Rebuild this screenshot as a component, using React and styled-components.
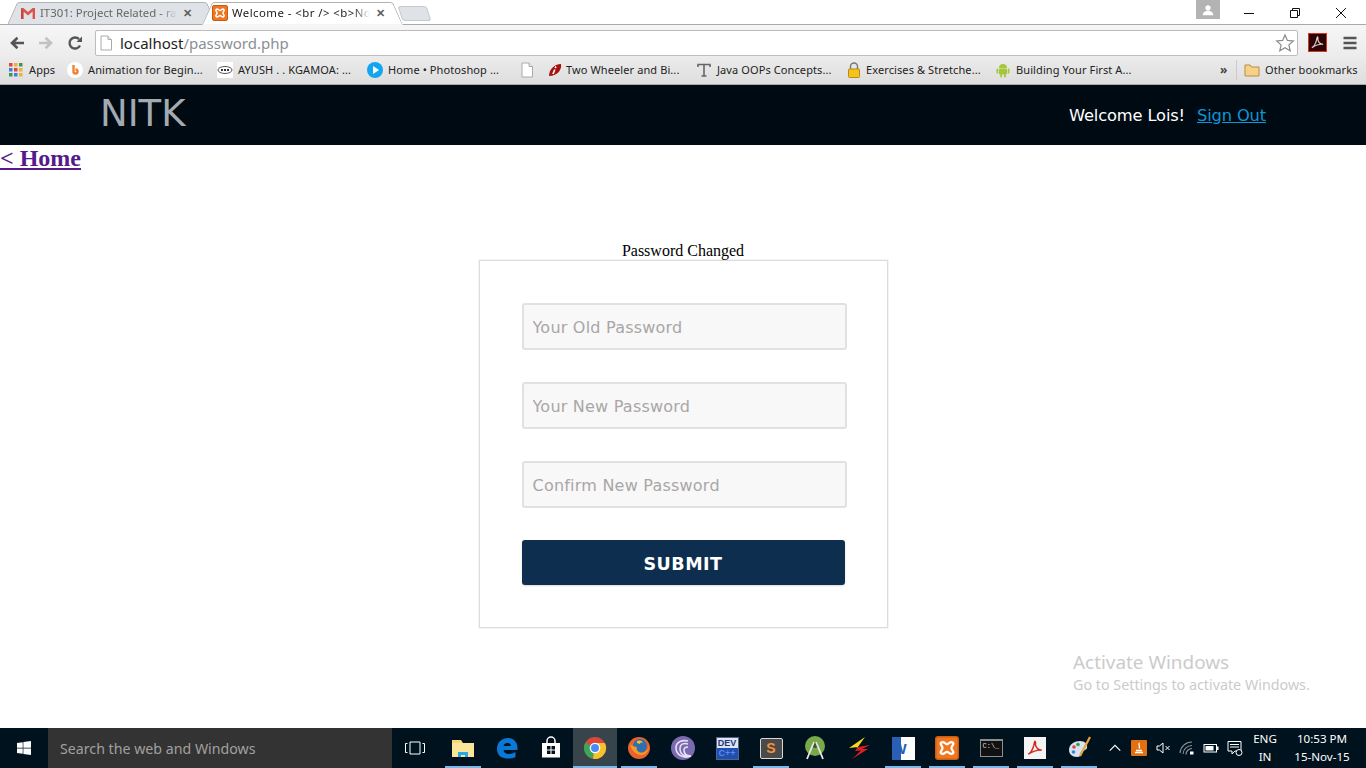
import React from 'react';
import styled, { createGlobalStyle } from 'styled-components';
import { FaWindows } from 'react-icons/fa';

const Global = createGlobalStyle`
  html, body { margin: 0; padding: 0; background: #fff; }
  * { box-sizing: border-box; }
`;

const uiFont = `"Noto Sans", "Open Sans", "Liberation Sans", sans-serif`;
const webFont = `"DejaVu Sans", Verdana, sans-serif`;

const Screen = styled.div`
  position: relative;
  width: 1366px;
  height: 768px;
  overflow: hidden;
  display: flex;
  flex-direction: column;
  background: #fff;
`;

/* browser chrome */
const TabStrip = styled.div`
  height: 25px;
  flex: none;
  display: flex;
  align-items: flex-end;
  padding: 0 2px 0 14px;
  background: #fff;
  border-bottom: 1px solid #a9a9a9;
  font-family: ${uiFont};
  font-size: 12px;
`;

const Tab = styled.div`
  position: relative;
  flex: none;
  width: ${p => p.$w}px;
  height: 23px;
  margin-bottom: -1px;
  margin-right: ${p => p.$mr || 0}px;
  display: flex;
  align-items: center;
  gap: 4px;
  padding: 0 0 2px ${p => p.$pl || 0}px;
  z-index: ${p => (p.$active ? 2 : 1)};
  color: ${p => (p.$active ? '#222' : '#666')};
  &::before, &::after {
    content: '';
    position: absolute;
    top: 0;
    bottom: 0;
    width: 55%;
    z-index: -1;
    background: ${p => (p.$active ? '#fff' : '#dfe2e7')};
    border-top: 1px solid #b2b2b2;
  }
  &::before {
    left: -2px;
    transform: skewX(-24deg);
    border-left: 1px solid #a9a9a9;
    border-top-left-radius: 3px;
    border-bottom: ${p => (p.$active ? '1px solid #f6f6f6' : '1px solid #a9a9a9')};
  }
  &::after {
    right: -2px;
    transform: skewX(24deg);
    border-right: 1px solid #a9a9a9;
    border-top-right-radius: 3px;
    border-bottom: ${p => (p.$active ? '1px solid #f6f6f6' : '1px solid #a9a9a9')};
  }
`;

const TabTitle = styled.span`
  width: ${p => p.$w}px;
  overflow: hidden;
  white-space: nowrap;
  font-size: 11.4px;
  letter-spacing: ${p => p.$ls || 0}px;
  mask-image: linear-gradient(to right, #000 88%, transparent);
`;

const TabClose = styled.span`
  font-size: 11px;
  font-weight: 700;
  color: #5f5f5f;
  margin-left: 2px;
  line-height: 1;
`;

const NewTab = styled.div`
  width: 29px;
  height: 15px;
  margin-left: 4px;
  margin-bottom: 3px;
  background: #dfe2e7;
  border: 1px solid #c4c8ce;
  border-radius: 3px;
  transform: skewX(18deg);
`;

const WindowControls = styled.div`
  margin-left: auto;
  align-self: flex-start;
  display: flex;
  align-items: flex-start;
  height: 23px;
`;

const ProfileBadge = styled.div`
  width: 24px;
  height: 19px;
  margin-right: 6px;
  background: #b3b3b3;
  display: flex;
  align-items: center;
  justify-content: center;
`;

const WinBtn = styled.div`
  width: 46px;
  height: 23px;
  display: flex;
  align-items: center;
  justify-content: center;
  padding-top: 3px;
`;

const Toolbar = styled.div`
  height: 32px;
  flex: none;
  display: flex;
  align-items: center;
  padding: 3px 7px 0 2px;
  background: linear-gradient(#f6f6f6, #ececec);
`;

const NavIcon = styled.div`
  width: 29px;
  display: flex;
  justify-content: center;
`;

const Omnibox = styled.div`
  width: 1203px;
  height: 26px;
  margin-left: 6px;
  display: flex;
  align-items: center;
  gap: 6px;
  padding: 0 2px 0 2px;
  background: #fff;
  border: 1px solid #bdbdbd;
  border-radius: 2px;
  font-family: ${uiFont};
  font-size: 15px;
  color: #8a8f94;
  b { font-weight: 400; color: #222; }
`;

const UrlText = styled.span`
  flex: 1;
`;

const ToolbarEnd = styled.div`
  display: flex;
  align-items: center;
  margin-left: 10px;
  gap: 15px;
`;

const PdfBadge = styled.div`
  width: 19px;
  height: 19px;
  background: #2b0606;
  border: 1px solid #e0301e;
  display: flex;
  align-items: center;
  justify-content: center;
`;

const Bookmarks = styled.div`
  height: 28px;
  flex: none;
  display: flex;
  align-items: center;
  padding: 0 0 2px 8px;
  background: linear-gradient(#ebebeb, #dedede);
  border-bottom: 1px solid #a9a9a9;
  font-family: ${uiFont};
  font-size: 11px;
  letter-spacing: 0.1px;
  color: #222;
`;

const Mark = styled.div`
  width: ${p => p.$w}px;
  flex: none;
  display: flex;
  align-items: center;
  gap: ${p => p.$gap || 5}px;
  white-space: nowrap;
`;

const MarkIcon = styled.span`
  width: 16px;
  height: 16px;
  flex: none;
  display: flex;
  align-items: center;
  justify-content: center;
`;

const Overflow = styled.span`
  margin-left: 89px;
  width: 16px;
  font-size: 12px;
  font-weight: 700;
  color: #444;
`;

const Divider = styled.span`
  width: 1px;
  height: 20px;
  margin: 0 7px 0 0;
  background: #c8ccd0;
`;

/* page */
const NavBar = styled.header`
  height: 60px;
  flex: none;
  display: flex;
  align-items: center;
  justify-content: space-between;
  padding: 0 100px 0 100px;
  background: #000a13;
`;

const Brand = styled.div`
  font-family: ${webFont};
  font-size: 37px;
  color: #a3abb2;
  margin-top: -3px;
`;

const UserArea = styled.div`
  display: flex;
  gap: 12px;
  font-family: ${webFont};
  font-size: 16.3px;
  letter-spacing: -0.15px;
  color: #fff;
  margin-top: 1px;
`;

const SignOut = styled.a`
  color: #0c96d6;
  text-decoration: underline;
  cursor: pointer;
`;

const HomeLink = styled.a`
  display: block;
  flex: none;
  font-family: "Liberation Serif", serif;
  font-weight: 700;
  font-size: 24px;
  line-height: 27px;
  color: #551a8b;
  text-decoration: underline;
  cursor: pointer;
`;

const Main = styled.main`
  flex: 1;
  display: flex;
  flex-direction: column;
  align-items: center;
  padding-top: 70px;
  min-height: 0;
`;

const Status = styled.div`
  font-family: "Liberation Serif", serif;
  font-size: 16px;
  line-height: 18px;
`;

const FormCard = styled.form`
  width: 409px;
  height: 368px;
  padding: 42px 41px 0 42px;
  border: 1px solid #dcdcdc;
  box-shadow: 0 0 1px rgba(0, 0, 0, 0.25);
  background: #fff;
  display: flex;
  flex-direction: column;
  gap: 32px;
`;

const Field = styled.input`
  width: 325px;
  height: 47px;
  padding: 2px 9px 0;
  flex: none;
  font-family: ${webFont};
  font-size: 16px;
  letter-spacing: 0.22px;
  background: #f8f8f8;
  border: 2px solid #e1e1e1;
  border-radius: 3px;
  outline: none;
  &::placeholder { color: #aaa6a6; opacity: 1; }
`;

const Submit = styled.button`
  width: 323px;
  height: 45px;
  flex: none;
  padding: 2px 0 0;
  font-family: ${webFont};
  font-weight: 700;
  font-size: 17.5px;
  letter-spacing: 0.5px;
  color: #fff;
  background: #0e2e50;
  border: none;
  border-radius: 3px;
  box-shadow: 0 1px 2px rgba(0, 0, 0, 0.15);
`;

const Watermark = styled.div`
  position: absolute;
  left: 1073px;
  top: 649px;
  font-family: ${uiFont};
  color: #cbcbcb;
  pointer-events: none;
`;

const WatermarkTitle = styled.div`
  font-size: 18.9px;
  line-height: 26px;
`;

const WatermarkSub = styled.div`
  font-size: 14.3px;
  line-height: 20px;
`;

/* taskbar */
const Taskbar = styled.footer`
  height: 40px;
  flex: none;
  display: flex;
  align-items: stretch;
  background: #00121d;
  font-family: ${uiFont};
  color: #fff;
`;

const StartBtn = styled.div`
  width: 48px;
  flex: none;
  display: flex;
  align-items: center;
  justify-content: center;
`;

const SearchBox = styled.div`
  width: 344px;
  flex: none;
  display: flex;
  align-items: center;
  padding-left: 12px;
  background: #333;
  color: #a0a0a0;
  font-size: 14.2px;
`;

const TaskView = styled.div`
  width: 49px;
  flex: none;
  display: flex;
  align-items: center;
  justify-content: center;
  margin-left: -2px;
  margin-right: 2px;
`;

const Slot = styled.div`
  position: relative;
  width: 44px;
  flex: none;
  display: flex;
  align-items: center;
  justify-content: center;
  background: ${p => (p.$current ? '#37444c' : 'transparent')};
  &::after {
    content: '';
    display: ${p => (p.$open ? 'block' : 'none')};
    position: absolute;
    bottom: 0;
    left: ${p => (p.$current ? 0 : 4)}px;
    right: ${p => (p.$current ? 0 : 4)}px;
    height: 2px;
    background: #76b9ed;
  }
`;

const Tray = styled.div`
  margin-left: 2px;
  display: flex;
  align-items: center;
`;

const TrayIcon = styled.div`
  width: ${p => p.$w || 24}px;
  flex: none;
  display: flex;
  align-items: center;
  justify-content: center;
`;

const TrayText = styled.div`
  width: ${p => p.$w}px;
  flex: none;
  text-align: center;
  font-size: 11.6px;
  line-height: 18px;
`;

/* icons */
const Icon = ({ s = 16, vb = 16, children }) => (
  <svg width={s} height={s} viewBox={`0 0 ${vb} ${vb}`}>{children}</svg>
);

const Gmail = () => (
  <Icon>
    <path d="M1 3h2.400L8 7l4.600-4H15v11h-2.400V6.600L8 10.400 3.400 6.600V14H1z" fill="#d9574a" />
    <path d="M3.400 6.600V14H1V3z" fill="#c9443a" />
  </Icon>
);

const Xampp = ({ s = 16 }) => (
  <Icon s={s}>
    <rect x="0.500" y="0.500" width="15" height="15" rx="1.500" fill="#f0761f" stroke="#c95e12" />
    <path d="M4 4.500c2-1.400 2.600 1 4 1s2-2.400 4-1c1 1-1 2-1 3.500s2 2.500 1 3.500c-2 1.400-2.600-1-4-1s-2 2.400-4 1c-1-1 1-2 1-3.500s-2-2.500-1-3.500z" fill="none" stroke="#fff" strokeWidth="1.500" />
  </Icon>
);

const ArrowLeft = ({ c }) => (
  <Icon>
    <path d="M15 8H4M8.500 2.800L3 8l5.500 5.200" fill="none" stroke={c} strokeWidth="2.600" />
  </Icon>
);

const ArrowRight = ({ c }) => (
  <Icon>
    <path d="M1 8h11M7.500 2.800L13 8l-5.500 5.200" fill="none" stroke={c} strokeWidth="2.600" />
  </Icon>
);

const Reload = () => (
  <Icon>
    <path d="M13 10.500A5.500 5.500 0 1 1 12 4.200" fill="none" stroke="#555" strokeWidth="2.400" />
    <path d="M9.500 7H15V1.500z" fill="#555" />
  </Icon>
);

const PageGlyph = ({ s = 16 }) => (
  <Icon s={s}>
    <path d="M3 1h7l3.500 3.500V15H3z" fill="#fff" stroke="#aaa" />
    <path d="M10 1v3.500h3.500" fill="#eee" stroke="#aaa" />
  </Icon>
);

const Star = () => (
  <Icon s={20} vb={20}>
    <path d="M10 2l2.400 5.400 5.900.6-4.400 3.900 1.300 5.800L10 14.700l-5.200 3 1.300-5.800L1.700 8l5.900-.6z" fill="#fff" stroke="#8a8a8a" strokeWidth="1.200" />
  </Icon>
);

const PdfMark = ({ s = 15, c = '#e6c8c8' }) => (
  <Icon s={s}>
    <path d="M2 13.500c2-1 4-4.500 5-8C7.300 3.500 7.500 2 8 2s.6 1.500.4 3C9 8 11 9.800 14 10c-3-.5-7 .5-12 3.500z" fill="none" stroke={c} strokeWidth="1.300" />
  </Icon>
);

const Menu = () => (
  <Icon>
    <path d="M1.500 3h13M1.500 8h13M1.500 13h13" stroke="#555" strokeWidth="2.500" />
  </Icon>
);

const AppsGrid = () => {
  const colors = ['#e0463a', '#f2b035', '#3b9a4e', '#3f7fe0', '#e0463a', '#f2b035', '#3b9a4e', '#3f7fe0', '#f2b035'];
  return (
    <Icon>
      {colors.map((c, i) => (
        <rect key={i} x={1 + (i % 3) * 5} y={1 + Math.floor(i / 3) * 5} width="3.500" height="3.500" fill={c} />
      ))}
    </Icon>
  );
};

const Blogger = () => (
  <Icon>
    <circle cx="8" cy="8" r="8" fill="#fff" />
    <path d="M6.500 3v6.500a2 2 0 1 0 2-2" fill="none" stroke="#f2812c" strokeWidth="2.400" />
  </Icon>
);

const Ayush = () => (
  <Icon>
    <rect width="16" height="16" fill="#fff" />
    <ellipse cx="8" cy="8" rx="7" ry="3.500" fill="none" stroke="#555" />
    <path d="M4 8h8" stroke="#333" strokeWidth="2" strokeDasharray="2 1" />
  </Icon>
);

const PlayBadge = () => (
  <Icon>
    <circle cx="8" cy="8" r="8" fill="#12a6ee" />
    <path d="M6 4l6 4-6 4z" fill="#fff" />
  </Icon>
);

const Wheeler = () => (
  <Icon>
    <path d="M2 14C2 8 7 2 14 2c1 5-3 12-12 12z" fill="#a5120f" />
    <path d="M9 4.500l-.8 1.500M7.800 7.500L6 12" stroke="#fff" strokeWidth="1.600" />
  </Icon>
);

const TypeGlyph = () => (
  <Icon>
    <path d="M2 5V2.500h12V5M8 2.500V14M5.500 14h5" fill="none" stroke="#666" strokeWidth="1.600" />
  </Icon>
);

const Lock = () => (
  <Icon>
    <path d="M4.500 7V4.500a3.500 3.500 0 0 1 7 0V7" fill="none" stroke="#777" strokeWidth="1.400" />
    <rect x="2.500" y="7" width="11" height="8.500" rx="1" fill="#f6c21c" stroke="#b98a10" />
  </Icon>
);

const AndroidGlyph = ({ c = '#a4c639' }) => (
  <Icon>
    <path d="M4 6a4 4 0 0 1 8 0z" fill={c} />
    <rect x="4" y="6.600" width="8" height="6" rx="1" fill={c} />
    <rect x="1.500" y="6.600" width="1.800" height="5" rx=".9" fill={c} />
    <rect x="12.700" y="6.600" width="1.800" height="5" rx=".9" fill={c} />
    <rect x="5.200" y="12" width="1.800" height="3.500" rx=".9" fill={c} />
    <rect x="9" y="12" width="1.800" height="3.500" rx=".9" fill={c} />
  </Icon>
);

const Folder = () => (
  <Icon>
    <path d="M1 3h5l1.500 2H15v9H1z" fill="#f8d189" stroke="#b68d45" />
  </Icon>
);

const FileExplorer = () => (
  <Icon s={24} vb={24}>
    <path d="M1 4h9l2 3h11v14H1z" fill="#f7d774" />
    <rect x="1" y="7" width="22" height="14" fill="#fbe59b" />
    <path d="M7 21v-5h10v5h-3v-2h-4v2z" fill="#29a8e8" />
  </Icon>
);

const Edge = () => (
  <Icon s={24} vb={24}>
    <path d="M2 13C2 6 7 2 13 2c6 0 9.500 4.500 9.500 10v2H8.500c.3 4.500 7 5 12 2v5c-6 3-18.500 2.500-18.500-8zm6.500-3h7.500c0-4-7-4-7.500 0z" fill="#0a78d6" />
  </Icon>
);

const Store = () => (
  <Icon s={24} vb={24}>
    <path d="M3 7h18v14.500H3z" fill="#fff" />
    <path d="M8 7V5a4 4 0 0 1 8 0v2" fill="none" stroke="#fff" strokeWidth="1.500" />
    <path d="M8 10h3.500v3.500H8zM12.500 10H16v3.500h-3.500zM8 14.500h3.500V18H8zM12.500 14.500H16V18h-3.500z" fill="#00121d" />
  </Icon>
);

const Chrome = () => (
  <Icon s={24} vb={24}>
    <circle cx="12" cy="12" r="11" fill="#d9483b" />
    <path d="M12 12L2.500 6.500A11 11 0 0 0 10 22.800z" fill="#3aa757" />
    <path d="M12 7h9.800A11 11 0 0 1 10 22.800z" fill="#f7c32d" />
    <circle cx="12" cy="12" r="5.300" fill="#fff" />
    <circle cx="12" cy="12" r="4" fill="#4c8bf5" />
  </Icon>
);

const Firefox = () => (
  <Icon s={24} vb={24}>
    <circle cx="12" cy="12" r="11" fill="#e8632a" />
    <circle cx="13" cy="10" r="7" fill="#2d6fb0" />
    <path d="M3 8c2 9 9 13 15 10 3-2 4-5 4-8-1 5-6 8-10 6-2-1-3-3-2-5-2 0-5-1-7-3z" fill="#f39a2b" />
    <path d="M10 5c2-1 5-1 6 2-2-1-3 0-3 1l-3-1z" fill="#f7c32d" />
  </Icon>
);

const Torrent = () => (
  <Icon s={24} vb={24}>
    <circle cx="12" cy="12" r="12" fill="#7a6bb0" />
    <path d="M20 20c-7 3-15-1-15-8S12 4 17 5M20 20c-5 1-11-1-11-7s5-6 8-5M20 20c-3 0-7-1-7-6 0-2 2-3 4-3" fill="none" stroke="#e6e2f2" strokeWidth="1.600" />
  </Icon>
);

const DevLabel = styled.div`
  width: 23px;
  height: 23px;
  background: linear-gradient(#dfe4f2 50%, #1f4fb0 50%);
  border: 1px solid #50648c;
  font-family: "Liberation Sans", sans-serif;
  font-weight: 700;
  font-size: 9px;
  line-height: 10.500px;
  text-align: center;
  color: #1e3a7a;
  span { display: block; color: #5a8ae8; }
`;

const Sublime = styled.div`
  width: 23px;
  height: 21px;
  background: #4a4a4a;
  border: 1px solid #d8d8d8;
  border-radius: 2px;
  color: #f2913a;
  font-family: "Liberation Sans", sans-serif;
  font-size: 14px;
  font-weight: 700;
  line-height: 18px;
  text-align: center;
`;

const AndroidStudio = () => (
  <Icon s={24} vb={24}>
    <circle cx="12" cy="10" r="10" fill="#78a94a" />
    <circle cx="12" cy="9" r="3" fill="#3d5a24" />
    <path d="M11 6L4 23M13 6l7 17" stroke="#e8e8e8" strokeWidth="1.800" />
  </Icon>
);

const Flash = () => (
  <Icon s={24} vb={24}>
    <path d="M18 1L2 12l9-1-3 4z" fill="#f7d91e" />
    <path d="M23 9l-12 2-3 4 6-.5L5 23l16-10-6 0z" fill="#e02020" />
  </Icon>
);

const WordTile = styled.div`
  width: 23px;
  height: 23px;
  background: #fff;
  border-left: 9px solid #2b5fb3;
  color: #2b5fb3;
  font-family: "Liberation Sans", sans-serif;
  font-weight: 700;
  font-size: 15px;
  line-height: 23px;
  text-indent: -8px;
`;

const Terminal = styled.div`
  width: 23px;
  height: 18px;
  background: #111;
  border: 1px solid #8d8d8d;
  border-top-width: 2px;
  color: #ddd;
  font-family: "Liberation Mono", monospace;
  font-size: 7px;
  line-height: 10px;
  padding-left: 2px;
`;

const PdfTile = styled.div`
  width: 22px;
  height: 22px;
  background: #f4f4f4;
  display: flex;
  align-items: center;
  justify-content: center;
`;

const Paint = () => (
  <Icon s={24} vb={24}>
    <path d="M2 14C2 8 8 5 13 5c5 0 8 3 7 7-1 3-5 2-6 4-1 2 1 5-4 5-5 0-8-3-8-7z" fill="#d5e4ee" />
    <circle cx="7" cy="11" r="1.800" fill="#e0463a" />
    <circle cx="11" cy="8.500" r="1.800" fill="#3b9a4e" />
    <circle cx="6.500" cy="16" r="1.800" fill="#3f7fe0" />
    <path d="M23 1L13 20" stroke="#e8a53a" strokeWidth="2.200" />
  </Icon>
);

const Speaker = () => (
  <Icon>
    <path d="M2 6h2.500L8 3v10L4.500 10H2z" fill="none" stroke="#fff" />
    <path d="M10.500 6l4 4M14.500 6l-4 4" stroke="#fff" />
  </Icon>
);

const Wifi = () => (
  <Icon>
    <path d="M1 13A12 12 0 0 1 13 2M4 14A9 9 0 0 1 13 5.500M7 14.500a6 6 0 0 1 6-6" fill="none" stroke="#8d9499" strokeWidth="1.100" />
    <rect x="11" y="11.500" width="3.500" height="3" fill="#fff" />
  </Icon>
);

const Battery = () => (
  <Icon>
    <rect x="1" y="4.500" width="12.500" height="7.500" fill="none" stroke="#fff" />
    <rect x="2.500" y="6" width="8" height="4.500" fill="#fff" />
    <rect x="14" y="6.500" width="1.500" height="3.500" fill="#fff" />
  </Icon>
);

const Notify = () => (
  <Icon>
    <path d="M1 1.500h13v9.500H8L5 14v-3H1z" fill="#00121d" stroke="#fff" />
    <path d="M3 4.500h9M3 7h9" stroke="#fff" />
    <circle cx="12" cy="12.500" r="3" fill="#00121d" stroke="#fff" />
  </Icon>
);

const bookmarks = [
  { w: 59, icon: <AppsGrid />, label: 'Apps' },
  { w: 150, icon: <Blogger />, label: 'Animation for Begin...' },
  { w: 150, icon: <Ayush />, label: 'AYUSH . . KGAMOA: ...' },
  { w: 152, icon: <PlayBadge />, label: 'Home • Photoshop ...' },
  { w: 28, icon: <PageGlyph />, label: '' },
  { w: 149, gap: 3, icon: <Wheeler />, label: 'Two Wheeler and Bi...' },
  { w: 150, icon: <TypeGlyph />, label: 'Java OOPs Concepts...' },
  { w: 149, gap: 4, icon: <Lock />, label: 'Exercises & Stretche...' },
  { w: 136, icon: <AndroidGlyph />, label: 'Building Your First A...' },
];

const taskApps = [
  { key: 'explorer', open: true, icon: <FileExplorer /> },
  { key: 'edge', icon: <Edge /> },
  { key: 'store', icon: <Store /> },
  { key: 'chrome', open: true, current: true, icon: <Chrome /> },
  { key: 'firefox', open: true, icon: <Firefox /> },
  { key: 'torrent', icon: <Torrent /> },
  { key: 'dev', icon: <DevLabel>DEV<span>C++</span></DevLabel> },
  { key: 'sublime', open: true, icon: <Sublime>S</Sublime> },
  { key: 'studio', icon: <AndroidStudio /> },
  { key: 'flash', icon: <Flash /> },
  { key: 'word', open: true, icon: <WordTile>W</WordTile> },
  { key: 'xampp', open: true, icon: <Xampp s={24} /> },
  { key: 'cmd', open: true, icon: <Terminal>C:\_</Terminal> },
  { key: 'pdf', open: true, icon: <PdfTile><PdfMark s={18} c="#d8261c" /></PdfTile> },
  { key: 'paint', open: true, icon: <Paint /> },
];

export default function App() {
  return (
    <Screen>
      <Global />

      <TabStrip>
        <Tab $w={196} $pl={6} $mr={-1}>
          <Gmail />
          <TabTitle $w={137}>IT301: Project Related - ra</TabTitle>
          <TabClose>✕</TabClose>
        </Tab>
        <Tab $w={187} $active $pl={3}>
          <Xampp />
          <TabTitle $w={138} $ls={0.45}>Welcome - &lt;br /&gt; &lt;b&gt;No</TabTitle>
          <TabClose>✕</TabClose>
        </Tab>
        <NewTab />
        <WindowControls>
          <ProfileBadge>
            <Icon s={12}>
              <circle cx="8" cy="5" r="3.500" fill="#fff" />
              <path d="M1 15c0-4 3-6 7-6s7 2 7 6z" fill="#fff" />
            </Icon>
          </ProfileBadge>
          <WinBtn>
            <Icon s={12} vb={12}><path d="M1 6.500h10" stroke="#111" /></Icon>
          </WinBtn>
          <WinBtn>
            <Icon s={12} vb={12}><path d="M1.500 3.500h7v7h-7zM3.500 3.500v-2h7v7h-2" fill="none" stroke="#111" /></Icon>
          </WinBtn>
          <WinBtn>
            <Icon s={12} vb={12}><path d="M1 1l10 10M11 1L1 11" stroke="#111" /></Icon>
          </WinBtn>
        </WindowControls>
      </TabStrip>

      <Toolbar>
        <NavIcon><ArrowLeft c="#555" /></NavIcon>
        <NavIcon><ArrowRight c="#c2c2c2" /></NavIcon>
        <NavIcon><Reload /></NavIcon>
        <Omnibox>
          <PageGlyph />
          <UrlText><b>localhost</b>/password.php</UrlText>
          <Star />
        </Omnibox>
        <ToolbarEnd>
          <PdfBadge><PdfMark /></PdfBadge>
          <Menu />
        </ToolbarEnd>
      </Toolbar>

      <Bookmarks>
        {bookmarks.map(b => (
          <Mark key={b.label || 'blank'} $w={b.w} $gap={b.gap}>
            <MarkIcon>{b.icon}</MarkIcon>
            {b.label && <span>{b.label}</span>}
          </Mark>
        ))}
        <Overflow>»</Overflow>
        <Divider />
        <Mark $w={120}>
          <MarkIcon><Folder /></MarkIcon>
          <span>Other bookmarks</span>
        </Mark>
      </Bookmarks>

      <NavBar>
        <Brand>NITK</Brand>
        <UserArea>
          <span>Welcome Lois!</span>
          <SignOut>Sign Out</SignOut>
        </UserArea>
      </NavBar>

      <HomeLink>&lt; Home</HomeLink>

      <Main>
        <Status>Password Changed</Status>
        <FormCard onSubmit={e => e.preventDefault()}>
          <Field type="password" placeholder="Your Old Password" />
          <Field type="password" placeholder="Your New Password" />
          <Field type="password" placeholder="Confirm New Password" />
          <Submit type="submit">SUBMIT</Submit>
        </FormCard>
      </Main>

      <Taskbar>
        <StartBtn><FaWindows size={16} color="#fff" /></StartBtn>
        <SearchBox>Search the web and Windows</SearchBox>
        <TaskView>
          <Icon s={22} vb={22}>
            <path d="M6 5h10v12H6zM3.500 6.500H1.500v9h2M18.500 6.500h2v9h-2" fill="none" stroke="#fff" />
          </Icon>
        </TaskView>
        {taskApps.map(a => (
          <Slot key={a.key} $open={a.open} $current={a.current}>{a.icon}</Slot>
        ))}
        <Tray>
          <TrayIcon>
            <Icon s={14}><path d="M2 11l6-6 6 6" fill="none" stroke="#fff" strokeWidth="1.300" /></Icon>
          </TrayIcon>
          <TrayIcon>
            <Icon>
              <rect width="16" height="16" rx="1" fill="#e2700f" />
              <path d="M4 12.500h8M5 10.500h6M8.500 3C6.500 5 10 6 8 8.500" fill="none" stroke="#fff" strokeWidth="1.300" />
            </Icon>
          </TrayIcon>
          <TrayIcon><Speaker /></TrayIcon>
          <TrayIcon><Wifi /></TrayIcon>
          <TrayIcon><Battery /></TrayIcon>
          <TrayIcon><Notify /></TrayIcon>
          <TrayText $w={36}>ENG<br />IN</TrayText>
          <TrayText $w={78}>10:53 PM<br />15-Nov-15</TrayText>
        </Tray>
      </Taskbar>

      <Watermark>
        <WatermarkTitle>Activate Windows</WatermarkTitle>
        <WatermarkSub>Go to Settings to activate Windows.</WatermarkSub>
      </Watermark>
    </Screen>
  );
}
